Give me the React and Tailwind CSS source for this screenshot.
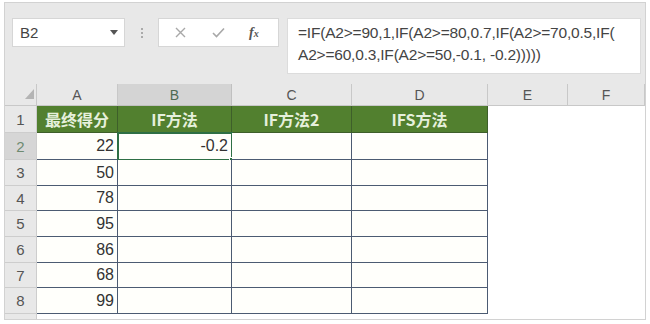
import React from "react";

const cols = [
  { k: "A", w: "w-[81px]" },
  { k: "B", w: "w-[114px]" },
  { k: "C", w: "w-[120px]" },
  { k: "D", w: "w-[136px]" },
  { k: "E", w: "w-[80px]" },
  { k: "F", w: "w-[77px]" },
];

const rowH = ["h-[27px]", "h-[27px]", "h-[26px]", "h-[25px]", "h-[26px]", "h-[26px]", "h-[25px]", "h-[26px]"];
const aVals = [null, "22", "50", "78", "95", "86", "68", "99"];
const headers = ["最终得分", "IF方法", "IF方法2", "IFS方法"];

function Cell({ ci, ri }) {
  const w = cols[ci].w;
  if (ci >= 4) {
    return <div className={`${w} h-full bg-white`} />;
  }
  if (ri === 0) {
    return (
      <div
        className={`${w} h-full bg-[#52802f] border-r border-b border-[#3e5f2a] flex items-center justify-center text-[16px] font-bold text-[#e6f0dc] leading-none`}
        style={{ fontFamily: '"Noto Sans CJK SC", "Noto Sans", sans-serif' }}
      >
        {headers[ci]}
      </div>
    );
  }
  const isSel = ci === 1 && ri === 1;
  let txt = null;
  if (ci === 0) txt = aVals[ri];
  if (isSel) txt = "-0.2";
  return (
    <div
      className={`${w} h-full relative bg-[#fffffb] border-r border-b border-[#4c5b72] flex items-center justify-end pr-[3px] text-[16px] text-[#333] leading-none`}
      style={{ fontFamily: '"Liberation Sans", Arial, sans-serif' }}
    >
      {txt}
      {isSel && (
        <>
          <div className="absolute left-[-1px] top-[-1px] right-[-2px] bottom-[-2px] border-2 border-[#2e6f45] pointer-events-none" />
          <div className="absolute right-[-4px] bottom-[-4px] w-[6px] h-[6px] bg-[#2e6f45] border border-white" />
        </>
      )}
    </div>
  );
}

export default function App() {
  return (
    <div className="w-[650px] h-[324px] bg-white overflow-hidden pt-[2px] pl-[4px]" style={{ fontFamily: '"Liberation Sans", Arial, sans-serif' }}>
      <div className="w-[642px] h-[318px] border border-[#d2d2d2] bg-[#e8e8e8] flex flex-col">
        {/* Top bar */}
        <div className="h-[81px] flex items-start pt-[15px] pl-[7px] shrink-0">
          <div className="w-[113px] h-[29px] bg-white border border-[#d6d6d6] flex items-center justify-between pl-[7px] pr-[6px]">
            <span className="text-[15px] text-[#444] leading-none">B2</span>
            <svg width="8" height="5" viewBox="0 0 8 5"><path d="M0 0 L8 0 L4 5 Z" fill="#555" /></svg>
          </div>
          <div className="w-[33px] h-[29px] flex flex-col items-center justify-center gap-[2px]">
            <div className="w-[2px] h-[2px] bg-[#aaa]" />
            <div className="w-[2px] h-[2px] bg-[#aaa]" />
            <div className="w-[2px] h-[2px] bg-[#aaa]" />
          </div>
          <div className="w-[121px] h-[29px] bg-white border border-[#d6d6d6] flex items-center">
            <svg className="ml-[16px]" width="11" height="11" viewBox="0 0 11 11">
              <path d="M1 1 L10 10 M10 1 L1 10" stroke="#a8a8a8" strokeWidth="1.4" fill="none" />
            </svg>
            <svg className="ml-[26px]" width="13" height="11" viewBox="0 0 13 11">
              <path d="M1 6 L4.5 9.5 L12 1.5" stroke="#a8a8a8" strokeWidth="1.6" fill="none" />
            </svg>
            <span
              className="ml-[24px] text-[14px] italic font-bold text-[#555] leading-none"
              style={{ fontFamily: '"Liberation Serif", "Times New Roman", serif' }}
            >
              f<span className="text-[10px]">x</span>
            </span>
          </div>
          <div className="ml-[8px] w-[354px] h-[56px] bg-white border border-[#dcdcdc] pl-[10px] pt-[3px] text-[15.5px] leading-[22px] text-[#444] tracking-[-0.2px]">
            <div>=IF(A2&gt;=90,1,IF(A2&gt;=80,0.7,IF(A2&gt;=70,0.5,IF(</div>
            <div>A2&gt;=60,0.3,IF(A2&gt;=50,-0.1, -0.2)))))</div>
          </div>
        </div>

        {/* Column header row */}
        <div className="h-[22px] flex shrink-0">
          <div className="w-[32px] h-full bg-[#e8e8e8] border-r border-b border-[#c8c8c8] relative">
            <svg className="absolute left-[20px] top-[5px]" width="9" height="10" viewBox="0 0 9 10">
              <path d="M9 0 L9 10 L0 10 Z" fill="#b4b4b4" />
            </svg>
          </div>
          {cols.map((c, i) => (
            <div
              key={c.k}
              className={`${c.w} h-full border-r border-b flex items-center justify-center text-[14px] leading-none ${
                i === 1 ? "bg-[#d4d4d4] border-[#c0c0c0] text-[#4e6b52]" : "bg-[#e8e8e8] border-[#c8c8c8] text-[#555]"
              }`}
            >
              {c.k}
            </div>
          ))}
        </div>

        {/* Rows */}
        {rowH.map((h, ri) => (
          <div key={ri} className={`${h} flex shrink-0`}>
            <div
              className={`w-[32px] h-full border-r border-b border-[#cdcdcd] flex items-center justify-center text-[15px] leading-none ${
                ri === 1 ? "bg-[#d6d6d6] text-[#6d8a70]" : "bg-[#e8e8e8] text-[#555]"
              }`}
            >
              {ri + 1}
            </div>
            {cols.map((c, ci) => (
              <Cell key={c.k} ci={ci} ri={ri} />
            ))}
          </div>
        ))}

        <div className="flex-1 flex">
          <div className="w-[32px] h-full bg-[#e8e8e8] border-r border-[#cdcdcd]" />
          <div className="flex-1 h-full bg-white" />
        </div>
      </div>
    </div>
  );
}
